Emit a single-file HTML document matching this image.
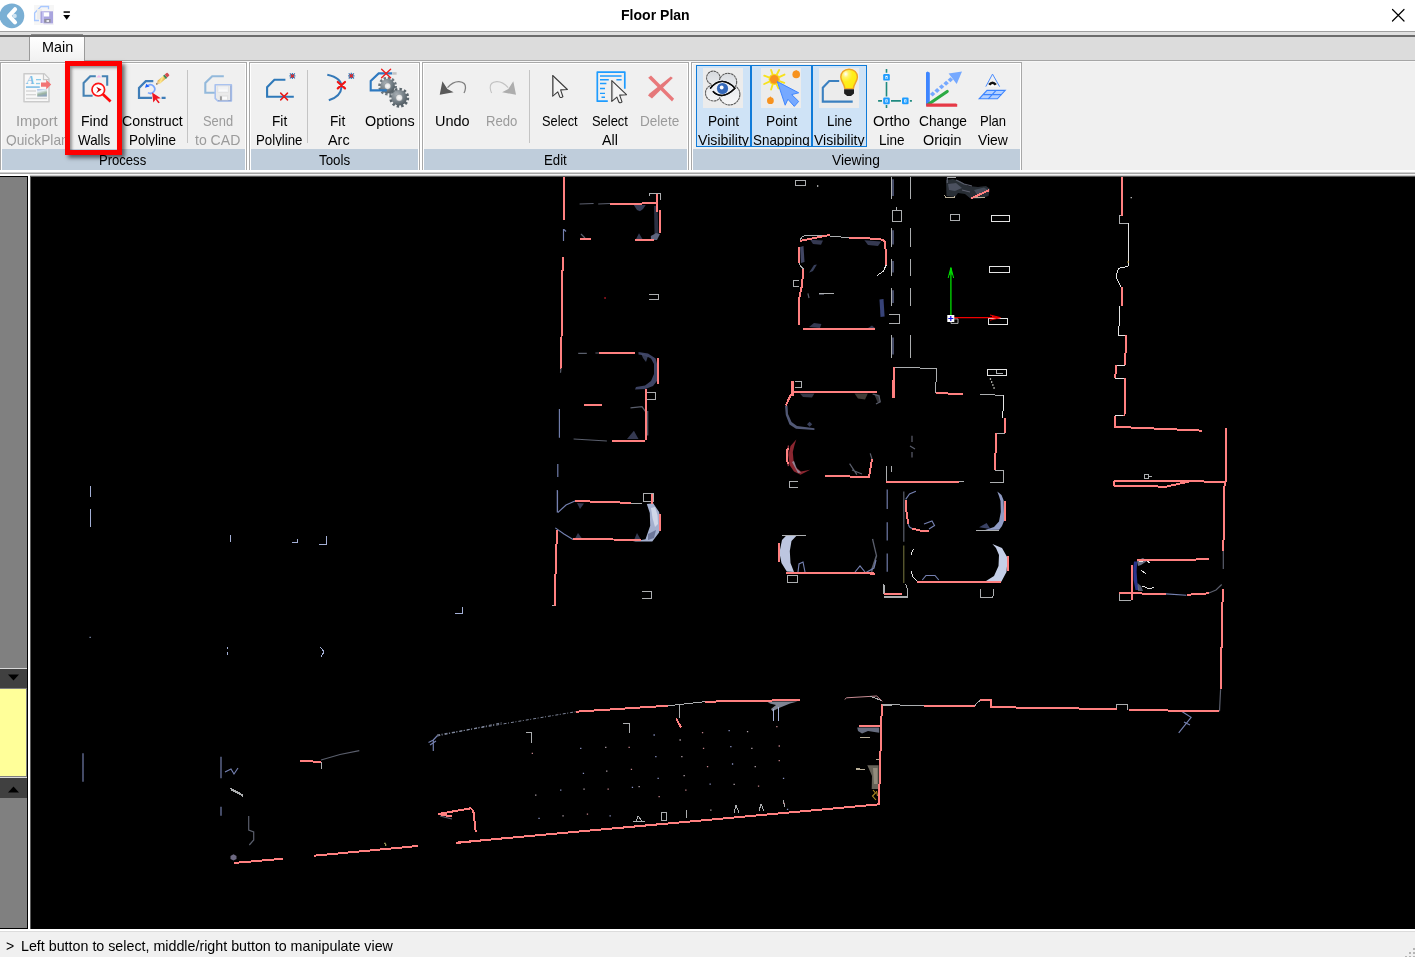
<!DOCTYPE html>
<html lang="en"><head><meta charset="utf-8"><title>Floor Plan</title>
<style>
html,body{margin:0;padding:0}
body{width:1415px;height:957px;overflow:hidden;position:relative;background:#f0f0f0;font:14.5px "Liberation Sans",sans-serif;color:#000}
div,span,svg{position:absolute;display:block}
.l{white-space:pre;line-height:18px;height:18px;transform-origin:0 0;font-size:14.5px}
.l.g{color:#9b9b9b}
.l.b{font-weight:bold}
#title{left:0;top:0;width:1415px;height:31px;background:#fff}
.hl{left:0;width:1415px;height:1px}
#tabstrip{left:0;top:37px;width:1415px;height:23px;background:#dcdcdc}
#tab{left:30px;top:37px;width:54px;height:25px;background:linear-gradient(#fff,#f0f0f0)}
.grp{top:62px;height:108px;border:1px solid #a8a8a8;border-bottom:none;box-sizing:border-box;background:#f0f0f0}
.grp i{position:absolute;display:block;left:1px;right:1px;bottom:0;height:21px;background:#bfcddb}
.grp b{position:absolute;display:block;left:0;top:0;right:0;bottom:0;border:1px solid #fff;border-bottom:none}
.sep{top:70px;width:1px;height:73px;background:#c4c4c4}
.tog{top:65px;height:82px;box-sizing:border-box;border:1px solid #0f7bd9;background:#cfe3f6}
.ibg{top:68px;width:40px;height:40px;background:#ececec}
#left{left:0;top:177px;width:27px;height:752px;background:#808080}
#view{left:31px;top:177px;width:1384px;height:752px;background:#000}
#status{left:0;top:932px;width:1415px;height:25px;background:#f0f0f0}

</style></head>
<body>
<div id="title"></div>
<div class="hl" style="top:31px;background:#a0a0a0"></div>
<div class="hl" style="top:32px;height:3px;background:#e0e0e0"></div>
<div class="hl" style="top:35px;height:2px;background:#6c6c6c"></div>
<div id="tabstrip"></div>
<div class="hl" style="top:60px;background:#a6a6a6"></div>
<div class="hl" style="top:61px;background:#f6f6f6"></div>
<div style="left:31px;top:34px;width:52px;height:1px;background:#8a8a8a"></div>
<div id="tab"></div>
<div style="left:29px;top:37px;width:1px;height:24px;background:#9a9a9a"></div>
<div style="left:84px;top:37px;width:1px;height:24px;background:#9a9a9a"></div>
<!-- ribbon groups -->
<div style="left:0;top:62px;width:1022px;height:108px;background:#fff"></div>
<div class="grp" style="left:0;width:247px"><b></b><i></i></div>
<div class="grp" style="left:249px;width:171px"><b></b><i></i></div>
<div class="grp" style="left:422px;width:267px"><b></b><i></i></div>
<div class="grp" style="left:691px;width:331px"><b></b><i></i></div>
<div class="sep" style="left:187px"></div>
<div class="sep" style="left:307px"></div>
<div class="sep" style="left:529px"></div>
<div class="tog" style="left:696px;width:55px"></div>
<div class="tog" style="left:751px;width:61px"></div>
<div class="tog" style="left:812px;width:55px"></div>
<div class="ibg" style="left:703px"></div>
<div class="ibg" style="left:761px"></div>
<div class="ibg" style="left:819px"></div>
<!-- ribbon bottom edge -->
<div class="hl" style="top:170px;height:2px;background:#fff"></div>
<div class="hl" style="top:172px;background:#d0d0d0"></div>
<div class="hl" style="top:173px;background:#a4a4a4"></div>
<div class="hl" style="top:174px;background:#f4f4f4"></div>
<div class="hl" style="top:175px;background:#c8c8c8"></div>
<div class="hl" style="top:176px;background:#585858"></div>
<div style="left:0;top:174px;width:29px;height:2px;background:#fff"></div>
<div style="left:0;top:176px;width:28px;height:1px;background:#000"></div>
<!-- left panel -->
<div id="left"></div>
<div style="left:0;top:928px;width:28px;height:1px;background:#000"></div>
<div style="left:27px;top:176px;width:1px;height:753px;background:#000"></div>
<div style="left:28px;top:175px;width:2px;height:754px;background:#fff"></div>
<div style="left:30px;top:177px;width:1px;height:752px;background:#5a5a5a"></div>
<div style="left:0;top:668px;width:27px;height:20px;background:#404040;border-top:1px solid #d8d8d8;box-sizing:border-box"></div>
<div style="left:0;top:689px;width:26px;height:87px;background:#ffff99"></div>
<div style="left:0;top:777px;width:27px;height:21px;background:#404040;border-top:1px solid #d8d8d8;box-sizing:border-box"></div>
<svg style="left:0;top:668px" width="27" height="130" viewBox="0 0 27 130"><path d="M8 6.5h11l-5.5 6z" fill="#000"/><path d="M8 124.500h11l-5.500-6z" fill="#000"/></svg>
<!-- view + status -->
<div id="view"></div>
<div class="hl" style="top:929px;height:2px;background:#fff"></div>
<div class="hl" style="top:931px;background:#dcdcdc"></div>
<div id="status"></div>
<svg style="left:1401px;top:944px" width="14" height="13" viewBox="0 0 14 13"><g fill="#b4b4b4"><rect x="12" y="4" width="2" height="2"/><rect x="8" y="8" width="2" height="2"/><rect x="12" y="8" width="2" height="2"/><rect x="4" y="12" width="2" height="2"/><rect x="8" y="12" width="2" height="2"/><rect x="12" y="12" width="2" height="2"/></g></svg>
<svg style="left:1388px;top:5px" width="20" height="20" viewBox="0 0 20 20"><path d="M4.500 4.500l11.500 11.500M16 4.500L4.500 16" stroke="#000" stroke-width="1.200" fill="none" stroke-linecap="round"/></svg>
<!-- quick access toolbar -->
<svg style="left:0;top:2px" width="80" height="28" viewBox="0 2 80 28">
<circle cx="11.900" cy="15.800" r="12.400" fill="#7aafd4"/>
<path d="M15 9.300L9 15.800L15 22.300" fill="none" stroke="#fff" stroke-width="4.200" stroke-linecap="round" stroke-linejoin="round"/>
<circle cx="14.600" cy="15.900" r="2.200" fill="#cfe3f1"/>
<rect x="34" y="5" width="20" height="20" fill="#f6f6f6"/>
<path d="M48.500 9.300V6.500H41L34.600 13V20.500H39" fill="none" stroke="#a9c8ff" stroke-width="1.300"/>
<rect x="37" y="9" width="5" height="10" fill="#ededed"/>
<rect x="40.500" y="11.300" width="12.500" height="11.700" fill="#a9a4de"/>
<rect x="42" y="11.300" width="2" height="11.700" fill="#c3c0f0"/>
<rect x="43.800" y="12.300" width="5.400" height="4.200" fill="#fff"/>
<rect x="44.200" y="19" width="6.400" height="3.600" fill="#8f8f9c"/>
<rect x="46.500" y="20" width="2.600" height="2" fill="#e8e8f0"/>
<path d="M43 23h10v1.200h-9z" fill="#d4d0ee"/>
<rect x="63.600" y="11.300" width="6.300" height="1.500" fill="#000"/>
<path d="M63.200 15h7l-3.500 4.800z" fill="#000"/>
</svg>
<!-- Import QuickPlan -->
<svg style="left:20px;top:70px" width="34" height="36" viewBox="20 70 34 36">
<defs><linearGradient id="pic" x1="0" y1="0" x2="0.300" y2="1"><stop offset="0" stop-color="#9fb6e6"/><stop offset="0.350" stop-color="#e3eef6"/><stop offset="0.700" stop-color="#9db5a2"/><stop offset="1" stop-color="#8ea3bb"/></linearGradient></defs>
<path d="M24 73.800H44.300L49 78.800V101.800H24z" fill="#f8f8f8" stroke="#cbcbcb" stroke-width="1.500" stroke-linejoin="round"/>
<path d="M43.500 74V79.600H49" fill="#f4f4f4" stroke="#c6c6c6" stroke-width="1.200"/>
<text x="26.300" y="84.200" font-family="'Liberation Serif',serif" font-style="italic" font-weight="bold" font-size="12.500" fill="#7fbde6">A</text>
<rect x="36" y="79" width="5" height="1.300" fill="#8ccbea"/>
<rect x="36" y="82.900" width="4" height="1.300" fill="#8ccbea"/>
<rect x="26" y="86.200" width="13.800" height="1.800" fill="#8cc4e8"/>
<rect x="26" y="90.300" width="10" height="1.400" fill="#d6d6d6"/>
<rect x="26" y="94" width="10" height="1.400" fill="#d6d6d6"/>
<rect x="26" y="97.800" width="21" height="1.400" fill="#d6d6d6"/>
<rect x="37.200" y="89" width="9.700" height="7.600" fill="url(#pic)"/>
<path d="M41 82.600H46.200V79.800L51.200 84.600L46.200 89.400V86.800H41z" fill="#f27474"/>
</svg>
<!-- Find Walls -->
<svg style="left:78px;top:70px" width="36" height="36" viewBox="78 70 36 36">
<path d="M92.600 95.700H83.600V83L90.200 76.200H95.800M101.800 76.200H107.200V85.800" fill="none" stroke="#4682b4" stroke-width="2.100" stroke-linejoin="miter"/>
<path d="M96.300 77.600L98.900 74.900L101.500 77.600z" fill="#f5b9ea"/>
<circle cx="98.300" cy="89.700" r="6.300" fill="#fff" stroke="#ff1414" stroke-width="1.700"/>
<path d="M102.900 94.300L110.600 101.600" stroke="#ff0a0a" stroke-width="2.700" fill="none"/>
<path d="M96.200 86.700L101.600 89.600L96.200 93.200L98.200 89.800z" fill="#c40000"/>
</svg>
<!-- Construct Polyline -->
<svg style="left:134px;top:68px" width="38" height="38" viewBox="134 68 38 38">
<defs><linearGradient id="pen" x1="0" y1="0" x2="1" y2="1"><stop offset="0" stop-color="#d9a03c"/><stop offset="0.450" stop-color="#ffe98a"/><stop offset="1" stop-color="#d49a3a"/></linearGradient></defs>
<path d="M153.300 81.200H145.800L139 88V97.800H152M161.600 97.800H165.600" fill="none" stroke="#3e7db8" stroke-width="2.200"/>
<path d="M147.800 85.600A4.300 4.300 0 1 1 148 92.600" fill="none" stroke="#78a6ff" stroke-width="1.700"/>
<path d="M145 87.800L146.300 83.800L149.600 86.600z" fill="#1a62ff"/>
<path d="M152.100 92.600L160.800 98.300L156.800 98.700L159.800 102.400L158.300 103.300L155.600 99.600L153.300 102.600z" fill="#f01822"/>
<g transform="rotate(-41 156.100 84.600)">
<path d="M156.100 84.600L159.600 82.700V86.500z" fill="#e8c690"/>
<path d="M156.100 84.600L157.600 83.800V85.400z" fill="#2a2a2a"/>
<rect x="159.600" y="82.700" width="7.800" height="3.800" fill="url(#pen)"/>
<rect x="167.200" y="82.500" width="1.900" height="4.200" fill="#3f8a55"/>
<rect x="169.100" y="82.700" width="3.300" height="3.800" rx="0.800" fill="#d24c50"/>
</g>
</svg>
<!-- Send to CAD -->
<svg style="left:200px;top:70px" width="36" height="36" viewBox="200 70 36 36">
<path d="M223.800 76.200H212.200L205.300 83V92.800H215" fill="none" stroke="#93b9db" stroke-width="2.100"/>
<path d="M215.200 84.800H231.400V101H217.800L215.200 98.400z" fill="#ebebeb" stroke="#a9c2ef" stroke-width="1.600" stroke-linejoin="round"/>
<path d="M230.800 85.500V100.600H218" fill="none" stroke="#93a8d4" stroke-width="1.100"/>
<rect x="217.800" y="86" width="10.800" height="6.300" fill="#f1f2f4" stroke="#dedede" stroke-width="0.600"/>
<rect x="219" y="89.500" width="8.400" height="1.700" fill="#fafafa"/>
<rect x="219.400" y="95.300" width="8.800" height="5" fill="#e2e2e2"/>
<rect x="220.200" y="96.300" width="1.500" height="4" fill="#8a8a8a"/>
<rect x="222.200" y="96.600" width="4.800" height="3" fill="#fbfbfb"/>
</svg>
<!-- Fit Polyline -->
<svg style="left:262px;top:70px" width="36" height="36" viewBox="262 70 36 36">
<path d="M285.400 79.800H274.400L267.100 87.200V96.700H293.800" fill="none" stroke="#2f79b9" stroke-width="2.100"/>
<path d="M280.700 93.100L287.500 99.900M287.500 93.100L280.700 99.900" stroke="#e81a1a" stroke-width="1.500" stroke-linecap="round" fill="none"/>
<g id="star"><path d="M292.400 72.900V78.900M289.400 75.900H295.400M289.900 73.400L294.900 78.400M294.900 73.400L289.900 78.400" stroke="#2f79b9" stroke-width="1.100" fill="none"/>
<path d="M290.800 74.300L294 77.500M294 74.300L290.800 77.500" stroke="#e02828" stroke-width="1.200" fill="none"/></g>
</svg>
<!-- Fit Arc -->
<svg style="left:320px;top:70px" width="38" height="36" viewBox="320 70 38 36">
<path d="M327.300 74.800Q341.800 78 341.500 87Q341 96.500 328.800 100.300" fill="none" stroke="#3479b8" stroke-width="2"/>
<path d="M337.800 82L345 88.400M345 82L337.800 88.400" stroke="#f01414" stroke-width="2.200" stroke-linecap="round" fill="none"/>
<g transform="translate(58.900 0)"><path d="M292.400 72.700V79.100M289.200 75.900H295.600M289.800 73.300L295 78.500M295 73.300L289.800 78.500" stroke="#2f79b9" stroke-width="1.200" fill="none"/>
<path d="M290.800 74.300L294 77.500M294 74.300L290.800 77.500" stroke="#e02828" stroke-width="1.300" fill="none"/></g>
</svg>
<!-- Options -->
<svg style="left:366px;top:64px" width="48" height="46" viewBox="366 64 48 46">
<defs>
<radialGradient id="gg" cx="0.350" cy="0.300" r="0.900"><stop offset="0" stop-color="#a9b0b5"/><stop offset="0.550" stop-color="#6f7a81"/><stop offset="1" stop-color="#3f494f"/></radialGradient>
<radialGradient id="gh" cx="0.500" cy="0.500" r="0.500"><stop offset="0" stop-color="#fafafa"/><stop offset="0.700" stop-color="#e6e6e6"/><stop offset="1" stop-color="#9aa0a4"/></radialGradient>
</defs>
<circle cx="387.600" cy="86.100" r="7.600" fill="none" stroke="#6c767d" stroke-width="3.600" stroke-dasharray="2.200 1.780"/>
<circle cx="387.600" cy="86.100" r="7.300" fill="url(#gg)"/>
<circle cx="387.600" cy="86.100" r="3.300" fill="url(#gh)"/>
<path d="M392.200 73.400H378.700L370.700 81V90.400H386.800" fill="none" stroke="#2e79c0" stroke-width="2.100"/>
<rect x="392.400" y="72.200" width="4.200" height="2.500" fill="#c2c2c2"/>
<path d="M381.600 69.200L390.600 77.700M390.600 69.200L381.600 77.700" stroke="#ef2020" stroke-width="1.400" stroke-linecap="round" fill="none"/>
<circle cx="399.200" cy="97.700" r="8.100" fill="none" stroke="#59646b" stroke-width="3.800" stroke-dasharray="2.300 1.940"/>
<circle cx="399.200" cy="97.700" r="7.800" fill="url(#gg)"/>
<circle cx="399.200" cy="97.700" r="3.500" fill="url(#gh)"/>
</svg>
<!-- Undo / Redo -->
<svg style="left:436px;top:76px" width="84" height="24" viewBox="436 76 84 24">
<g id="undo"><path d="M447.500 87.600Q453 81.400 459 81.600Q466 82.200 465.500 88Q465.200 90.800 464 93" fill="none" stroke="#7f7f7f" stroke-width="1.300"/>
<path d="M442.400 81.200L439.700 94.700L453.600 92.300L447.400 89z" fill="#5a5a5a"/></g>
<g transform="translate(955.700 0) scale(-1 1)"><path d="M447.500 87.600Q453 81.400 459 81.600Q466 82.200 465.500 88Q465.200 90.800 464 93" fill="none" stroke="#c2c2c2" stroke-width="1.100"/>
<path d="M442.400 81.200L439.700 94.700L453.600 92.300L447.400 89z" fill="#adadad"/></g>
</svg>
<!-- Select -->
<svg style="left:548px;top:72px" width="24" height="30" viewBox="548 72 24 30">
<path id="cur" d="M552.700 75.500V96.200L557.800 91.900L559.700 96.800Q561.300 98.300 562.900 96.700L560.600 89.900L567.400 89.500z" fill="#f4f4f4" stroke="#3c3c3c" stroke-width="1.100" stroke-linejoin="round"/>
<path d="M553.400 77.500V94.800" stroke="#9a9a9a" stroke-width="1.200" fill="none"/>
</svg>
<!-- Select All -->
<svg style="left:594px;top:70px" width="36" height="36" viewBox="594 70 36 36">
<path d="M624.800 88.800V72.100H597.300V101.200H607.800" fill="none" stroke="#1e9cff" stroke-width="1.700" stroke-linejoin="round"/>
<path d="M600 76H621.600M600 79.800H608.800M616.400 79.800H621.600M600 83.500H606.400M600 88.500H605M600 93.400H605M601.500 97.300H605" stroke="#1e9cff" stroke-width="1.400" fill="none"/>
<g transform="translate(59.100 5.200)"><path d="M552.700 75.500V96.200L557.800 91.900L559.700 96.800Q561.300 98.300 562.900 96.700L560.600 89.900L567.400 89.500z" fill="#f4f4f4" stroke="#3c3c3c" stroke-width="1.100" stroke-linejoin="round"/>
<path d="M553.400 77.500V94.800" stroke="#9a9a9a" stroke-width="1.200" fill="none"/></g>
</svg>
<!-- Delete -->
<svg style="left:644px;top:72px" width="34" height="32" viewBox="644 72 34 32">
<path d="M648.200 77.800L651 75.400L674.100 98.800L672 101.400L660 89.600z" fill="#e9797b"/>
<path d="M670.800 76.400L672.800 78L652 98.400L648 95.600L649.500 93.400z" fill="#e5787a"/>
</svg>
<!-- Point Visibility -->
<svg style="left:703px;top:68px" width="40" height="40" viewBox="703 68 40 40">
<defs><linearGradient id="cl" gradientUnits="userSpaceOnUse" x1="0" y1="70" x2="0" y2="106"><stop offset="0" stop-color="#d4d7db"/><stop offset="0.450" stop-color="#e9ebee"/><stop offset="1" stop-color="#f7f7f7"/></linearGradient></defs>
<g stroke="#5c5c5c" stroke-width="1.300" stroke-dasharray="2.600 0.500" fill="none">
<circle cx="713.300" cy="77.800" r="6.600"/><circle cx="728" cy="82" r="8.600"/><circle cx="713.500" cy="93" r="7.900"/><circle cx="729.500" cy="94.500" r="10.300"/>
</g>
<g fill="url(#cl)"><circle cx="713.300" cy="77.800" r="6.100"/><circle cx="728" cy="82" r="8.100"/><circle cx="713.500" cy="93" r="7.400"/><circle cx="729.500" cy="94.500" r="9.800"/><rect x="712" y="80" width="18" height="16"/></g>
<path d="M710.200 88.500Q721.600 74.500 735 88.200Q722 101 712.900 91.300" fill="#eef0f5" stroke="#0a0a0a" stroke-width="1.300" stroke-linejoin="round"/>
<circle cx="722.500" cy="88.500" r="5.600" fill="#3468b9"/>
<circle cx="721.700" cy="87.500" r="1.900" fill="#fff"/>
<path d="M710.200 88.500Q721.600 74.500 735 88.200Q722 101 712.900 91.300" fill="none" stroke="#0a0a0a" stroke-width="1.300" stroke-linejoin="round"/>
</svg>
<!-- Point Snapping -->
<svg style="left:761px;top:68px" width="40" height="40" viewBox="761 68 40 40">
<g stroke="#f7e21c" stroke-width="1.900" stroke-linecap="round" fill="none">
<path d="M774.300 79.300L771.100 70M774.300 79.300L779.200 70M774.300 79.300L784.500 74.600M774.300 79.300L784.300 82.800M774.300 79.300L778.500 88.300M774.300 79.300L771.100 89.500M774.300 79.300L764.200 84M774.300 79.300L764.200 75.700"/></g>
<circle cx="774.300" cy="79.300" r="5.600" fill="#f8dc1e"/>
<circle cx="774.300" cy="79.300" r="4.400" fill="#f7921e"/>
<circle cx="796.200" cy="74.400" r="3.800" fill="#f7921e"/><path d="M794.800 71.400L796.200 69.900L797.600 71.400z" fill="#f7921e"/>
<circle cx="770.400" cy="100.700" r="3.400" fill="#f7921e"/><path d="M769.200 98L770.400 96.300L771.600 98z" fill="#f7921e"/>
<path d="M777.300 81.600L798.700 92.800L791.700 94.600L798.700 101.400L794.300 106.400L787.900 99.200L785.200 105.200z" fill="#76a9ff" stroke="#3f86ff" stroke-width="1" stroke-linejoin="round"/>
</svg>
<!-- Line Visibility -->
<svg style="left:819px;top:68px" width="40" height="40" viewBox="819 68 40 40">
<defs><radialGradient id="bl" cx="0.300" cy="0.250" r="0.800"><stop offset="0" stop-color="#ffffff"/><stop offset="0.220" stop-color="#fff36a"/><stop offset="0.500" stop-color="#ffee1c"/><stop offset="1" stop-color="#fde910"/></radialGradient></defs>
<path d="M839.200 81H829.200L822.800 87.700V101.600H852.700" fill="none" stroke="#3b80c0" stroke-width="2.100"/>
<path d="M849.100 69.200C854.200 69.200 857.400 72.800 857.400 77C857.400 81.500 853.800 83.500 853.400 88.600H844.800C844.400 83.500 840.800 81.500 840.800 77C840.800 72.800 844 69.200 849.100 69.200z" fill="url(#bl)" stroke="#f0a424" stroke-width="1.400"/>
<path d="M844.100 89.200H854V93.400L851 96H847.200L844.100 93.400z" fill="#1f1f1f"/>
</svg>
<!-- Ortho Line -->
<svg style="left:876px;top:68px" width="38" height="41" viewBox="876 68 38 41">
<path d="M886.500 69V72.700M886.500 81.900V96.600M886.500 105.100V107.900M878.100 100.900H882M891 100.900H900.900M909.900 100.900H911.900" stroke="#1f8a80" stroke-width="1.600" fill="none"/>
<g fill="#1e9cff"><rect x="883.200" y="74" width="6.600" height="6.600" rx="1.200"/><rect x="883.200" y="97.600" width="6.600" height="6.600" rx="1.200"/><rect x="902" y="97.600" width="6.600" height="6.600" rx="1.200"/></g>
<g fill="#fff"><rect x="885.400" y="75.800" width="2.200" height="3" /><rect x="885.400" y="99.400" width="2.200" height="3"/><rect x="904.200" y="99.400" width="2.200" height="3"/></g>
<g fill="#1e9cff"><rect x="886.100" y="77" width="0.800" height="1.600"/><rect x="886.100" y="100.200" width="0.800" height="1.600"/><rect x="904.900" y="100.200" width="0.800" height="1.600"/></g>
</svg>
<!-- Change Origin -->
<svg style="left:922px;top:68px" width="44" height="42" viewBox="922 68 44 42">
<path d="M926 72.400L927.600 71.400L929.800 72.800V105.800H926z" fill="#3d85ff"/>
<path d="M928.800 104L947.200 91.500" stroke="#2bab44" stroke-width="3.200" stroke-linecap="round" fill="none"/>
<path d="M926.200 103.600H956.200L957.200 104.400V106.800H926.200z" fill="#e63946"/>
<path d="M948.600 73.600L962 71.600L956.700 84z" fill="#76a9ff"/>
<g fill="#76a9ff"><path d="M929.9 94.0L932.6 91.5L935.3 94.0L932.6 96.5z"/><path d="M934.4 90.4L937.1 87.9L939.8 90.4L937.1 92.9z"/><path d="M938.9 86.8L941.6 84.3L944.3 86.8L941.6 89.3z"/><path d="M943.4 83.2L946.1 80.7L948.8 83.2L946.1 85.7z"/><path d="M947.7 79.8L950.4 77.3L953.1 79.8L950.4 82.3z"/></g>
</svg>
<!-- Plan View -->
<svg style="left:976px;top:70px" width="34" height="34" viewBox="976 70 34 34">
<path d="M988.200 86.600L990.600 82.400H994.600L997 86.600z" fill="#fff"/><path d="M985.800 86.600L992.500 74.100L999.600 86.600" fill="none" stroke="#4a8cff" stroke-width="1"/>
<path d="M989.200 84.800Q992.500 80.600 995.800 84.800" fill="none" stroke="#111" stroke-width="2.400"/>
<path d="M987 90.400H1005.200L997.400 98.800H979.200z" fill="#b3d0ff" stroke="#3d85ff" stroke-width="1.100"/>
<path d="M996.100 90.400L988.300 98.800M983.100 94.600H1001.300" stroke="#3d85ff" stroke-width="1.200" fill="none"/>
</svg>
<div id="labels">
<span class="l" style="left:41.9px;top:38.3px;transform:scaleX(0.9924)">Main</span>
<span class="l b" style="left:621.0px;top:5.9px;transform:scaleX(0.9689)">Floor Plan</span>
<span class="l" style="left:99.4px;top:150.8px;transform:scaleX(0.9009)">Process</span>
<span class="l" style="left:319.4px;top:150.8px;transform:scaleX(0.9215)">Tools</span>
<span class="l" style="left:544.0px;top:150.8px;transform:scaleX(0.9120)">Edit</span>
<span class="l" style="left:831.9px;top:150.8px;transform:scaleX(0.9479)">Viewing</span>
<span class="l" style="left:6.4px;top:937.0px;transform:scaleX(0.9683)">&gt;</span>
<span class="l" style="left:20.7px;top:937.0px;transform:scaleX(0.9838)">Left button to select, middle/right button to manipulate view</span>
</div>
<div id="rlabels" style="left:0;top:62px;width:1030px;height:84.400px;overflow:hidden">
<span class="l g" style="left:16.4px;top:50.0px;transform:scaleX(1.0148)">Import</span>
<span class="l g" style="left:6.4px;top:69.0px;transform:scaleX(0.9487)">QuickPlan</span>
<span class="l" style="left:80.9px;top:50.0px;transform:scaleX(0.9639)">Find</span>
<span class="l" style="left:78.4px;top:69.0px;transform:scaleX(0.9225)">Walls</span>
<span class="l" style="left:121.8px;top:50.0px;transform:scaleX(0.9780)">Construct</span>
<span class="l" style="left:129.0px;top:69.0px;transform:scaleX(0.9236)">Polyline</span>
<span class="l g" style="left:202.9px;top:50.0px;transform:scaleX(0.8886)">Send</span>
<span class="l g" style="left:194.9px;top:69.0px;transform:scaleX(0.9690)">to CAD</span>
<span class="l" style="left:271.7px;top:50.0px;transform:scaleX(0.9435)">Fit</span>
<span class="l" style="left:255.8px;top:69.0px;transform:scaleX(0.9137)">Polyline</span>
<span class="l" style="left:329.9px;top:50.0px;transform:scaleX(0.9435)">Fit</span>
<span class="l" style="left:327.7px;top:69.0px;transform:scaleX(0.9931)">Arc</span>
<span class="l" style="left:364.6px;top:50.0px;transform:scaleX(0.9923)">Options</span>
<span class="l" style="left:434.6px;top:50.0px;transform:scaleX(0.9979)">Undo</span>
<span class="l g" style="left:485.8px;top:50.0px;transform:scaleX(0.9056)">Redo</span>
<span class="l" style="left:541.8px;top:50.0px;transform:scaleX(0.8831)">Select</span>
<span class="l" style="left:591.5px;top:50.0px;transform:scaleX(0.8905)">Select</span>
<span class="l" style="left:601.7px;top:69.0px;transform:scaleX(0.9798)">All</span>
<span class="l g" style="left:640.4px;top:50.0px;transform:scaleX(0.9351)">Delete</span>
<span class="l" style="left:707.9px;top:50.0px;transform:scaleX(0.9406)">Point</span>
<span class="l" style="left:697.7px;top:69.0px;transform:scaleX(0.9768)">Visibility</span>
<span class="l" style="left:765.8px;top:50.0px;transform:scaleX(0.9467)">Point</span>
<span class="l" style="left:753.1px;top:69.0px;transform:scaleX(0.9252)">Snapping</span>
<span class="l" style="left:827.1px;top:50.0px;transform:scaleX(0.9153)">Line</span>
<span class="l" style="left:814.1px;top:69.0px;transform:scaleX(0.9691)">Visibility</span>
<span class="l" style="left:872.9px;top:50.0px;transform:scaleX(1.0230)">Ortho</span>
<span class="l" style="left:879.0px;top:69.0px;transform:scaleX(0.9336)">Line</span>
<span class="l" style="left:918.5px;top:50.0px;transform:scaleX(0.9449)">Change</span>
<span class="l" style="left:922.6px;top:69.0px;transform:scaleX(0.9926)">Origin</span>
<span class="l" style="left:979.8px;top:50.0px;transform:scaleX(0.8990)">Plan</span>
<span class="l" style="left:977.6px;top:69.0px;transform:scaleX(0.9592)">View</span>
</div>
<div id="redbox" style="left:65px;top:61px;width:57px;height:94px;box-sizing:border-box;border:5px solid #fe0000;box-shadow:3px 3px 4px rgba(0,0,0,.55), inset 2px 2px 3px rgba(0,0,0,.38)"></div>
<svg id="plan" style="left:31px;top:177px" width="1384" height="752" viewBox="31 177 1384 752" fill="none">
<path d="M646.8 504L653.2 503.2 659.1 512.1 660.8 521.5 659.1 532.5 652.3 541.4 632.8 541.4 645.5 539.3 650.2 525.7 649.8 513z" fill="#a4b0cf"/>
<path d="M796.3 439.5L790.5 446 788.4 455 789.5 465 794 471.5 800.5 474.7 810.2 469.8 801 471.5 795.5 467 793.5 460 792.8 452 794.5 445z" fill="#8a2630"/>
<path d="M786.8 534.9L782 540 779.4 552.7 781.5 563 786.8 571.5 794 572 790.5 563 789.8 551 791.5 541 797 535.2z" fill="#bcc6e0"/>
<path d="M997.3 491.5L1001.5 495 1003.6 500.3 1004.2 520.4 1002 526 999.2 529.8 985 530 994 527 999 521.5 1000.8 512 1000.5 501 999 496z" fill="#8f9bc4"/>
<path d="M992.4 544L1002 548 1007.7 558 1006.5 572 1001.3 581.8 986 581 994 576 998.5 566 999 555 996 548z" fill="#c5cfe8"/>
<path d="M1134 561.5L1137.2 561.5 1136.6 572 1137.5 584 1139.5 590 1135.5 590 1133.6 580 1133.3 568z" fill="#28348c"/>
<path d="M230.5 856L233.5 854.3 236.5 856 236.5 859 233.5 860.5 230.5 859z" fill="#6c6880"/>
<defs><filter id="fz" x="-5%" y="-5%" width="110%" height="110%"><feGaussianBlur stdDeviation="0.450"/></filter></defs>
<g filter="url(#fz)">
<path d="M633.8 205L645.7 205 643 209 640 211.3 637 210z" fill="#4a5274" fill-opacity="0.750"/>
<path d="M654 206L657.5 206 658.5 234 654.5 234z" fill="#3a4058" fill-opacity="0.750"/>
<path d="M650.8 236L656 233.3 660 234 657 240 651 240z" fill="#7c86a8" fill-opacity="0.750"/>
<path d="M635.5 240L639 233.3 643 240z" fill="#454c6c" fill-opacity="0.750"/>
<path d="M638.5 352L648 353.5 655.7 358.4 657.5 366 657.5 380.2 653 386 645.4 388.9 635 389.4 636 387 645 385.5 651 381 654 374 654 364 651 358.5 645 355.5 638.5 354.5z" fill="#525a84" fill-opacity="0.750"/>
<path d="M627 438.9L633.9 430.8 638.5 438.9z" fill="#454c6c" fill-opacity="0.750"/>
<path d="M641 353.5L648 356 646 362 643 358z" fill="#4a5274" fill-opacity="0.750"/>
<path d="M651 508L655 507 657.5 515 658 524 655 527 652.5 518z" fill="#dfe4f2" fill-opacity="0.750"/>
<path d="M577 503L584 503.5 580 509z" fill="#454c6c" fill-opacity="0.750"/>
<path d="M575 538.5L578 533 582 538.5z" fill="#454c6c" fill-opacity="0.750"/>
<path d="M634 540L637 533 641 540z" fill="#454c6c" fill-opacity="0.750"/>
<path d="M648 534L656 530 654 538 648 540z" fill="#5b6488" fill-opacity="0.750"/>
<path d="M800.1 247L803.5 246 804.5 262 801 263z" fill="#555e84" fill-opacity="0.750"/>
<path d="M810.2 239.7L823 240.5 821 244.8 813 244z" fill="#454c6c" fill-opacity="0.750"/>
<path d="M864.4 240.3L881.2 241.5 878 245.9 868 245z" fill="#454c6c" fill-opacity="0.750"/>
<path d="M809 272.7L814 265 816.9 264.4 813 271z" fill="#4a5478" fill-opacity="0.750"/>
<path d="M809 327L814 323 821.4 324 820 328z" fill="#454c6c" fill-opacity="0.750"/>
<path d="M879.5 299.6L883.5 299 884.6 316.4 880.5 317z" fill="#4a58a0" fill-opacity="0.750"/>
<path d="M868 328L872 325.5 875.5 328.5z" fill="#454c6c" fill-opacity="0.750"/>
<path d="M785 405.5L787.5 405.5 788 414 791.5 422 797 426 814.4 428.2 814.4 430 796 428.8 789.5 424.5 785.8 415z" fill="#6c769c" fill-opacity="0.750"/>
<path d="M807 424.3L809.6 421.8 812.2 424.3 809.6 426.8z" fill="#4c5478" fill-opacity="0.750"/>
<path d="M799.9 393.5L814.4 393.5 812 397.6 803 397z" fill="#4a4e60" fill-opacity="0.750"/>
<path d="M854.5 393.5L867.8 393.5 865 399.5 858 398.5z" fill="#55524a" fill-opacity="0.750"/>
<path d="M873.9 393.4L879.5 395 880.5 403.1 877.5 402z" fill="#4a4a50" fill-opacity="0.750"/>
<path d="M792 462L794 461 797 469 801 472.5 798 473z" fill="#9aa0b4" fill-opacity="0.750"/>
<path d="M946 180L953 179 960 181 968 186 978 187 986 186 990 189 988.5 196 980 198.5 971 199 965 194 958 193 955 197 946.5 196z" fill="#363c46" fill-opacity="0.750"/>
<path d="M948 184L956 183 962 188 955 191 949 190z" fill="#555c6c" fill-opacity="0.750"/>
<path d="M974 190L984 187.5 988 190 978 196z" fill="#4e5566" fill-opacity="0.750"/>
<path d="M979.1 527.3L986.6 522.9 990.4 529z" fill="#4c5684" fill-opacity="0.750"/>
<path d="M1137 560.5L1143 558 1147 561 1141 565 1138 566z" fill="#8f98b4" fill-opacity="0.750"/>
<path d="M1137.5 583L1141 586 1143 591 1138 591z" fill="#70788f" fill-opacity="0.750"/>
<path d="M766.9 701.5L797.6 701.5 790 703.5 779 708 772.5 711.3 771 709 776 705 770 703.5z" fill="#a8b0c4" fill-opacity="0.750"/>
<path d="M857.2 727.5L879.2 727.5 879.2 732.7 868 731 862 733.5 858 731z" fill="#8890a8" fill-opacity="0.750"/>
<path d="M867.3 765.3L878.6 765.3 878.6 789.1 871.7 789.1 872 776 869 769z" fill="#8a8476" fill-opacity="0.750"/>
<path d="M873 768L877.5 768 877.5 784 874 784z" fill="#a09888" fill-opacity="0.750"/>
<path d="M579.6 204L593.6 203.5M598.2 204L610 203.5M581 234L585 238M578.2 353.4L586.8 353.4M595.4 353L598.9 353M573.6 439L606.9 441M630.5 407.8L642 406.7 645.4 411.3M647.7 411L647.7 435.4M561 368L560.5 372.8M807.9 293.4L809 298M819 294.2L824 294.2M849.6 463.7L856.9 474.7M852 470L862 474M870.2 453.4L872 459M872.7 539.4L876.6 556 871.5 572.5M947.3 177.5L947.3 182.9M956 180L964 184 972 186M962 190L970 192M872.6 394L879 396 880.2 401.7 876 404M912 435.7L912 442M910 446L915 449M912 452L912 457.4M903.8 491.5L903.8 541.7M872.5 539L876.4 555.5 871.3 570.8M1223.3 551L1223.3 569M1220.6 689.2L1219.5 711.3M1208.9 593L1216 590 1221.7 584.5M440 816L452 819M321 760L340 754.5 359.3 750.7M248.7 816L248.7 830 253.7 832 253.7 840 249.3 845" stroke="#5a5e6c" stroke-width="1.200"/>
<path d="M559.4 409L559.4 437.7M557.8 464L557.8 477M557.5 491L557.5 512.6M563.5 229L563.5 241M564 229.5L566 231.5M557.8 512.6L566 505 575 501M555.3 527.9L564 534 573 539.4M557.3 490L557.3 512.6M798 572L799 564 803 562 805 572M855 572L860 566 865 572M866 572.5L874 568 876 560M893 179.3L893 196M893 230.3L893 244.4M893 260.9L893 272.5M893 290.2L893 303M893 337.4L893 354.6M915.9 491.3L909.5 494 905.7 499.4M908.2 524.2L909.5 527 912 528.5M924 524L932 521 934.5 525.5 929 529M887.2 489.6L887.2 509M887.2 522.3L887.2 540.5M887.2 553.6L887.2 571.8M922.3 580L926 575.5 935 575.5 938.8 580M1165.9 593.9L1186.3 595.2M1178.7 732.8L1191.1 717.3 1181.5 711.3M1184 722L1190 725M433.3 740L433.3 751M428.5 742.5L433.3 740 437.5 735.5M430 745L436 741M83 753.3L83 781.7M221 756.7L221 778.3M225 772L231 769 234 774 238 768M221 806.7L221 815.7" stroke="#7480b0" stroke-width="1.150"/></g>
<path d="M437 735L576 711.7M437.4 736L502.6 722.6" stroke="#8a92a8" stroke-width="0.900" stroke-dasharray="3 1.500 1 2"/>
<path d="M903.8 545.5L903.8 583" stroke="#7a7a40" stroke-width="1"/>
<path d="M788.4 445.5L787.2 458.9 788.4 466.2" stroke="#9c3848" stroke-width="1.300"/>
<path d="M773.2 709L773.2 720.7M778.8 707L778.8 720.7M90.5 486L90.5 497M90 508.5L90 527M230.3 534.6L230.3 541.5M291.9 542L297.6 542 297.6 538.5M318.6 544.3L326.6 544.3 326.6 536.3M454.7 613L462.4 613 462.4 607M227.3 646.7L227.3 649M227.3 652L227.3 654.7M320.6 647.4L324 652 320.6 657.4" stroke="#a4b0d6" stroke-width="1" shape-rendering="crispEdges"/>
<path d="M844.7 699.4L846.6 697.8 876.7 696 882.3 701.3" stroke="#c88c94" stroke-width="1"/>
<path d="M873 790L875.5 793 872.5 796 876 800M876.5 791L877.5 796" stroke="#b08a22" stroke-width="1.100"/>
<path d="M944.9 195.3L945.8 197.8 954.3 197.8 954.3 195.5M975 197.8L985 197M860.4 737.7L869.8 737.7M856 769.3L865.4 769.3M856 768.5L860 768.5M876 759.6L878.5 759.6" stroke="#b8ae98" stroke-width="1" shape-rendering="crispEdges"/>
<path d="M552 605.6L556 605.6M649 193L660 193 660 199.8M649 193L649 196M648.8 294L658 294 658 299.3 648.8 299.3M646.6 392.9L655.7 392.9 655.7 399.8 646.6 399.8M630.7 503L642.1 503M643 493L653.6 493 653.6 501 643 501 643 493M641.5 591.6L651.4 591.6 651.4 598 641.5 598M830.3 236L848.8 237.8M800 240L802 237 805.1 235.6 829.7 235.6M799 262.7L800.5 266 803.5 268.8M799 280.3L793.4 280.3 793.4 286.2 799 286.2M818.6 293.4L833.7 293.4M795.1 180L805.6 180 805.6 185.2 795.1 185.2 795.1 180M795 381.5L801.7 381.5 801.7 387.3 795 387.3M789.6 481.3L798.1 481.3M789.6 481.3L789.6 487.4 798.1 487.4M782.2 535.5L806.4 535.5M787.3 575L797.5 575 797.5 582.7 787.3 582.7 787.3 575M886.6 468L886.6 481.3M891.5 466.2L891.5 471.6M883.7 584L883.7 594.2M883.7 597L908 597M891.7 177.3L891.7 199M910.3 177.3L910.3 199M891.7 228.3L891.7 247.4M910.3 228.3L910.3 247.4M891.7 258.9L891.7 275.5M910.3 258.9L910.3 275.5M891.7 288.2L891.7 306M910.3 288.2L910.3 306M891.7 335.4L891.7 357.6M910.3 335.4L910.3 357.6M892.4 210.4L901.9 210.4 901.9 221.4 892.4 221.4 892.4 210.4M896 206.5L896 210.4M950.3 214.3L959.8 214.3 959.8 220.6 950.3 220.6 950.3 214.3M996 369.3L996 373 1003 373M947.3 177.5L955.7 177.5M889 314.1L899.7 314.1 899.7 323.6 889 323.6M893.5 367.2L936.3 368.5 935.8 392.7M979.6 394.5L1003.9 395.3M1005.1 433.1L996.2 433.1M994.9 470.1L1003.1 470.1 1003.1 482.1 989.8 482.1M959.2 481.6L963.5 481.8M886.6 466.3L886.6 482M976 530.4L999 530.4M884 584.8L884 593.8M884 596.8L907.7 596.8M905.7 583.6L907.5 590 907 597M980.4 589.4L980.4 597.5 992 597.5 993.6 595 993.6 589.4M1122.4 215.5L1119.9 215.5 1119.9 223.2 1128.8 223.2M1144 474.5L1148 474.5 1148 478 1144 478 1144 474.5M1149 476.5L1152 476.5M1119 593.7L1119 600.5 1131 600.5M974.7 705.8L977 703 980.3 700.3M1116.7 709L1116.7 704.4 1127.7 704.4 1127.7 709.8M882.4 704.4L923.7 705.8M870 696.1L881 700.3M668.3 705.7L705 701.7M679.3 705L679.3 718M881 705L892 705M526 732.7L531.7 732.7 531.7 742.7M623.3 723.3L629.3 723.3 629.3 733.3M636 821.7L638 816 642 821M633 822L645 821M661 812L666 812 666 820 661 820 661 812M686.7 810L686.7 817.5M734 813L736 805 739 813M759 811L761 804 764 811M783.5 800L784.5 807M321 762L321 769.3M230.3 788.3L243.3 795M231 789.8L243 796.2" stroke="#acaeb0" stroke-width="1" shape-rendering="crispEdges"/>
<path d="M886.2 265L883.4 271 877.3 275.5M991.1 215.5L1009.8 215.5 1009.8 221.4 991.1 221.4 991.1 215.5M989.3 266.5L1009 266.5 1009 272.9 989.3 272.9 989.3 266.5M988.6 318.3L1007.7 318.3 1007.7 324.4 988.6 324.4 988.6 318.3M987.3 369.3L1006.9 369.3 1006.9 375.4 987.3 375.4 987.3 369.3M1003.9 395.3L1002.6 417.8M913.3 549.1L910.8 555.5M910.8 570.8L913 577 917.2 581M1128.8 223.2L1128 266.5 1118.6 268.3M1118.6 268.3L1116 276.7 1121.1 286.9M1119.9 306L1118.6 335.4 1126.3 335.4M1125 365.2L1116 365.2M1115.3 378L1125 378M1124.5 415.8L1115.3 415.8M1139 562L1146 560 1150 563M1141 570L1146 574M1142 586L1150 589 1154 587" stroke="#e4e4e4" stroke-width="1" shape-rendering="crispEdges"/>
<path d="M564 177.3L564 219.6M562.7 257.5L561.9 316 561 364 560.4 368.5M557 530L555.6 570 554.8 605.6M610 204L642 204M642 203L658 203M657 194L657 212M660 210L660 233M634.7 240L653.7 240M579.8 239L591 239M598.9 352.9L634.5 352.9M658 357.8L658 383.7M646 388.9L646 440M583.9 405.2L602.3 405.2M612 440.9L645.4 440.9M575.1 501.1L608.6 502 630.7 503M652 493.9L652 503.7M660 514.3L660 530.8M573 538.9L584.5 539 640.9 540M800.1 240.9L830.3 234.9M848.8 237.8L862.2 237.8 883.4 239.7 884.5 241.5 886.2 253.7 886.2 264.9M799 247L799 262.7M803.5 268.8L801.8 286.2 799 299.6 799 325.3M802.9 329L874.5 329M792 380.7L792 395.8M793.4 380.7L793.4 395.8M792.6 392L876.9 392M792.6 392L789 398.5 786 405.5M824.8 475.9L849.6 475.9M849.6 477.1L869 477.1 872 458.9M787.6 448L787 458 787.8 464M778.9 543.2L778.9 562.3M786 572.5L874 573M893.1 380L893.1 397.8M886.3 482L900 482M883.7 594.2L900 594.2M971.1 198.3L988.9 190.3M868 328.5L875.1 328.5M893.5 397.8L893.5 367.2M935.8 392.7L963.1 394.5M876.4 392.2L870 392.2M1005.1 417.8L1005.1 433.1M996.2 433.1L994.9 470.1M886.6 482.1L959.2 481.6M905.7 500.3L906.5 512 908.2 524.2M912 528.5L920 530.5 928.9 531M1005.1 501L1005.1 521M917.2 581.8L1001.3 581.8M1008.2 555.5L1008.2 570.8M870 574.2L875 574.2M884 593.8L901.9 593.8M1122.4 177L1122.4 215.5M1122.4 286.9L1121.9 306M1126.3 335.4L1125 365.2M1116 365.2L1115.3 378M1125 378L1124.5 415.8M1115.3 415.8L1115.3 426.8 1201.6 430.6M1226.3 428L1226.3 481.6M1224.6 481.6L1223.3 551M1222.8 588.8L1220.6 689.2M1113.6 481.1L1224.6 481.6M1113.6 485.5L1165.9 486.7 1188.9 481.6M1113.6 481.1L1113.6 485.5M1137.2 559.7L1196 559.7M1196 558.8L1208.9 558.8M1132.1 565.2L1132.1 600.1M1119 593L1141.8 593M1141.8 594L1166.1 594.2M1186.8 595.3L1190.9 595.3M1190.9 594L1206.1 594M1206 593L1208.9 593M923.7 705.8L974.7 705.8M980.3 700.3L990.7 700.3 990.7 707.1 1116.7 709.1M1129.1 709.9L1219.5 711.3M881.7 705L881.7 716.3M880.7 716.3L880.7 750.9M879.8 750.9L879.8 783.5M879 783.5L879 804.8M456 842.7L879.3 804.3M881 705L881.6 704.4M576 711.7L668.3 705.7M705 701.7L800 700M859.1 725.8L880 725.8M676 718.3L681 727.3M438.3 814L470.7 808.3 473.3 810.7 475.7 831.7M438.3 814L452 816.5M300 760.7L321 762M233.7 863L283.3 858.7M314.3 855.7L417.7 846M456 843L502.7 838.3" stroke="#ff8080" stroke-width="2" shape-rendering="crispEdges"/>
<path d="M604.4 298h1.300" stroke="#e02030" stroke-width="1.300"/>
<path d="M817 186h1.300" stroke="#d0d0d0" stroke-width="1.300"/>
<path d="M989.8 379h1.300M991 382h1.300M992.2 385h1.300M993.4 388h1.300" stroke="#d8d8d0" stroke-width="1.300"/>
<path d="M1130.6 197.7h1.300" stroke="#c0c0c0" stroke-width="1.300"/>
<path d="M1127.5 262h1.300" stroke="#c0a040" stroke-width="1.300"/>
<path d="M531.7 753.4h1.300M628.5 747.4h1.300M701.9 732.7h1.300M776.2 726.7h1.300M702.9 748.4h1.300M778.6 746h1.300M630.8 769.4h1.300M706.9 766.7h1.300M778.6 760.7h1.300M607.5 789.1h1.300M685.2 790.1h1.300M757.9 786.1h1.300M658.5 796.7h1.300M586.8 814.1h1.300M783.6 803.4h1.300" stroke="#c08088" stroke-width="1.300"/>
<path d="M580.1 748.4h1.300M653.5 735h1.300M728.5 730.7h1.300M655.2 756.7h1.300M730.2 746.7h1.300M582.8 773.4h1.300M657.5 778.4h1.300M731.9 764h1.300M560.1 790.1h1.300M631.8 787.4h1.300M709.5 784.1h1.300M782.9 778.4h1.300M538.4 818.4h1.300M609.5 815.8h1.300M786.9 809.4h1.300" stroke="#8890c0" stroke-width="1.300"/>
<path d="M605.1 747.4h1.300M679.5 740h1.300M746.9 731.7h1.300M681.2 756.7h1.300M751.2 748.4h1.300M606.1 771.1h1.300M683.5 775.7h1.300M754.6 766.7h1.300M583.4 789.1h1.300M638.5 786.7h1.300M733.5 784.4h1.300M535.1 795.1h1.300M562.4 815.8h1.300M710.2 810.1h1.300" stroke="#b0a0a8" stroke-width="1.300"/>
<path d="M384.3 843.3h1.300M385 845h1.300" stroke="#c8c870" stroke-width="1.300"/>
<path d="M89.5 637.3h1.300" stroke="#8090b0" stroke-width="1.300"/>
<g id="axes">
<path d="M951 318.900h7v4.500h-7z" stroke="#b0b0b0" stroke-width="1"/>
<path d="M950.900 315V268" stroke="#00e000" stroke-width="1.300"/>
<path d="M950.900 267.500L948.200 278M950.900 267.500L953.600 278M950.900 270L949.600 275M950.900 270L952.200 275" stroke="#00e000" stroke-width="1"/>
<path d="M954 317.600H1000" stroke="#f00000" stroke-width="1.300"/>
<path d="M1000.500 317.600L990 315M1000.500 317.600L990 320.200M998 317.600L992 316.400" stroke="#f00000" stroke-width="1"/>
<rect x="947.300" y="315" width="7" height="7" fill="#fff"/>
<path d="M950.800 316V321M948.300 318.500H953.300" stroke="#1010e0" stroke-width="1.200"/>
</g>

</svg>
</body></html>
